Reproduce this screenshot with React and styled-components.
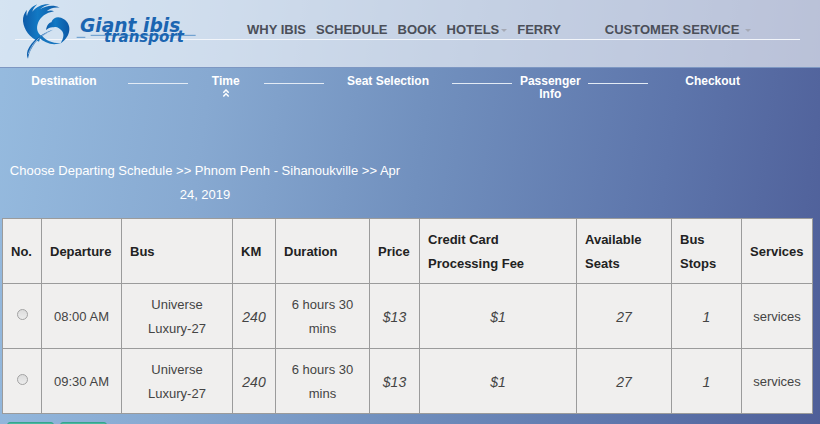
import React from 'react'
import styled, { createGlobalStyle } from 'styled-components'
import { FaAngleDoubleUp } from 'react-icons/fa'

const GlobalStyle = createGlobalStyle`
  * {
    box-sizing: border-box;
  }
  html {
    scrollbar-width: none;
  }
  body {
    margin: 0;
    font-family: 'Liberation Sans', Arial, sans-serif;
    font-size: 13px;
    line-height: 24px;
    color: #444;
  }
`

const Page = styled.div`
  min-height: 100vh;
  background: linear-gradient(98deg, #96bbdf 0%, #87a9d1 25%, #7190be 50%, #5d75ab 78%, #4e5e98 100%);
`

const Header = styled.header`
  height: 68px;
  padding: 0 20px 0 15px;
  background-color: #ffffff99;
  border-bottom: 1px solid #7d97c2;
`

const HeaderBar = styled.div`
  display: flex;
  align-items: flex-start;
  height: 40px;
  border-bottom: 1px solid #f2f5fa;
`

const LogoLink = styled.a`
  flex: none;
  width: 190px;
  height: 64px;
  margin-right: 42px;
`

const LogoSvg = styled.svg`
  display: block;
`

const Nav = styled.nav`
  display: flex;
  gap: 10px;
  padding-top: 18px;
  white-space: nowrap;
`

const NavLink = styled.a`
  display: flex;
  align-items: center;
  gap: ${props => props.$caretGap || 2}px;
  margin-left: ${props => (props.$apart ? 34 : 0)}px;
  color: #4b4f59;
  font-weight: 700;
  text-decoration: none;
`

const Caret = styled.span`
  border: 3px solid transparent;
  border-top-color: #a5a9b5;
  border-bottom: 0;
`

const Steps = styled.ol`
  display: grid;
  grid-template-columns: 128fr 60fr 76fr 60fr 129fr 60fr 76fr 60fr 129fr;
  height: 91px;
  margin: 0;
  padding: 7px 43px 0 0;
  list-style: none;
`

const Step = styled.li`
  color: #fff;
  font-size: 12px;
  font-weight: 700;
  line-height: 13px;
  text-align: center;
`

const StepMark = styled(FaAngleDoubleUp)`
  display: block;
  width: 10px;
  height: 10px;
  margin: 0 auto;
`

const StepLine = styled.li`
  height: 1px;
  margin-top: 8px;
  background-color: #e3ebf5;
`

const Heading = styled.h1`
  width: 50%;
  margin: 0;
  padding: 0 8px;
  color: #fff;
  font-size: 13px;
  font-weight: 400;
  text-align: center;
`

const ScheduleTable = styled.table`
  width: calc(100% - 10px);
  margin: 11px 0 0 2px;
  table-layout: fixed;
  border-collapse: collapse;
  background-color: #f0efee;
`

const Th = styled.th`
  height: 65px;
  padding: 9px 8px 7px;
  border: 1px solid #9b9b9b;
  color: #222;
  text-align: left;
`

const Td = styled.td`
  height: 65px;
  padding: 9px 8px 7px;
  border: 1px solid #9b9b9b;
  text-align: center;
`

const Figure = styled.em`
  font-size: 14px;
`

const Radio = styled.input`
  appearance: none;
  width: 11px;
  height: 11px;
  margin: 0 0 1px;
  border: 1px solid #a3a3a3;
  border-radius: 50%;
  background: linear-gradient(#dcdcdc, #ececec);

  &:checked {
    background: radial-gradient(#555 30%, #e6e6e6 40%);
  }
`

const Actions = styled.div`
  display: flex;
  gap: 6px;
  padding: 8px 7px;
`

const ActionButton = styled.button`
  width: 47px;
  height: 28px;
  padding: 0;
  border: 1px solid #35a58c;
  border-radius: 3px;
  background-color: #48b8a0;
`

const columns = [
  { title: 'No.', width: 39 },
  { title: 'Departure', width: 80 },
  { title: 'Bus', width: 111 },
  { title: 'KM', width: 43 },
  { title: 'Duration', width: 94 },
  { title: 'Price', width: 50 },
  { title: 'Credit Card Processing Fee', width: 157 },
  { title: 'Available Seats', width: 95 },
  { title: 'Bus Stops', width: 70 },
  { title: 'Services', width: 71 },
]

const Col = styled.col`
  width: ${props => props.$width}px;
`

const schedules = [
  { time: '08:00 AM', bus: 'Universe Luxury-27', km: 240, duration: '6 hours 30 mins', price: '$13', fee: '$1', seats: 27, stops: 1 },
  { time: '09:30 AM', bus: 'Universe Luxury-27', km: 240, duration: '6 hours 30 mins', price: '$13', fee: '$1', seats: 27, stops: 1 },
]

function Logo() {
  return (
    <LogoSvg width="190" height="64" viewBox="45 0 570 192">
      <defs>
        <linearGradient id="feather" x1="0" y1="0" x2="1" y2="0">
          <stop offset="0" stopColor="#0e5ba8" />
          <stop offset="0.4" stopColor="#1279c4" />
          <stop offset="1" stopColor="#0d57a4" />
        </linearGradient>
      </defs>
      {/* wing */}
      <path
        fill="url(#feather)"
        d="M117 125 C89 114 72 90 69 64 C68 50 73 39 81 29 C79 38 79 43 81 48 C84 32 94 20 112 13 C103 21 99 28 97 35 C110 18 132 10 150 13 C136 16 127 21 120 28 C139 16 162 14 179 23 C161 21 149 26 140 34 C150 31 156 31 162 34 C138 38 121 51 114 69 C108 85 112 98 123 107 Z"
      />
      {/* head and breast */}
      <path
        fill="url(#feather)"
        d="M138 90 C141 75 146 69 154 67 C160 50 178 48 192 58 C216 74 214 109 182 130 C191 114 194 101 184 91 C177 83 169 79 162 82 C153 80 145 84 138 90 Z"
      />
      {/* tail and beak */}
      <path fill="#0f61ae" d="M159 89 C124 100 94 123 83 151 C80 161 80 169 84 176 C88 155 99 131 121 113 C132 104 145 96 159 89 Z" />
      <path d="M148 95 C115 110 94 134 85 163" fill="none" stroke="#d6e3f2" strokeWidth="2" />
      <path fill="#1674be" d="M116 112 C135 131 160 137 183 129 C159 130 139 123 126 107 Z" />
      <path d="M230 112 H256 M272 106 H587" stroke="#5f97cb" strokeWidth="3" fill="none" />
      <g fill="#1b65b1" fontFamily="'DejaVu Sans', sans-serif" fontStyle="italic" fontWeight="700">
        <text x="240" y="96" fontSize="56">Giant ibis</text>
        <text x="312" y="127" fontSize="45">transport</text>
      </g>
    </LogoSvg>
  )
}

export default function App() {
  return (
    <>
      <GlobalStyle />
      <Page>
        <Header>
          <HeaderBar>
            <LogoLink href="#home">
              <Logo />
            </LogoLink>
            <Nav>
              <NavLink href="#why">WHY IBIS</NavLink>
              <NavLink href="#schedule">SCHEDULE</NavLink>
              <NavLink href="#book">BOOK</NavLink>
              <NavLink href="#hotels">HOTELS<Caret /></NavLink>
              <NavLink href="#ferry">FERRY</NavLink>
              <NavLink href="#service" $apart $caretGap={6}>CUSTOMER SERVICE<Caret /></NavLink>
            </Nav>
          </HeaderBar>
        </Header>

        <Steps>
          <Step>Destination</Step>
          <StepLine />
          <Step aria-current="step">Time<StepMark /></Step>
          <StepLine />
          <Step>Seat Selection</Step>
          <StepLine />
          <Step>Passenger Info</Step>
          <StepLine />
          <Step>Checkout</Step>
        </Steps>

        <Heading>Choose Departing Schedule &gt;&gt; Phnom Penh - Sihanoukville &gt;&gt; Apr 24, 2019</Heading>

        <ScheduleTable>
          <colgroup>
            {columns.map(column => <Col key={column.title} $width={column.width} />)}
          </colgroup>
          <thead>
            <tr>
              {columns.map(column => <Th key={column.title} scope="col">{column.title}</Th>)}
            </tr>
          </thead>
          <tbody>
            {schedules.map(row => (
              <tr key={row.time}>
                <Td><Radio type="radio" name="schedule" aria-label={row.time} /></Td>
                <Td>{row.time}</Td>
                <Td>{row.bus}</Td>
                <Td><Figure>{row.km}</Figure></Td>
                <Td>{row.duration}</Td>
                <Td><Figure>{row.price}</Figure></Td>
                <Td><Figure>{row.fee}</Figure></Td>
                <Td><Figure>{row.seats}</Figure></Td>
                <Td><Figure>{row.stops}</Figure></Td>
                <Td>services</Td>
              </tr>
            ))}
          </tbody>
        </ScheduleTable>

        <Actions>
          <ActionButton type="button" aria-label="Back" />
          <ActionButton type="button" aria-label="Next" />
        </Actions>
      </Page>
    </>
  )
}
